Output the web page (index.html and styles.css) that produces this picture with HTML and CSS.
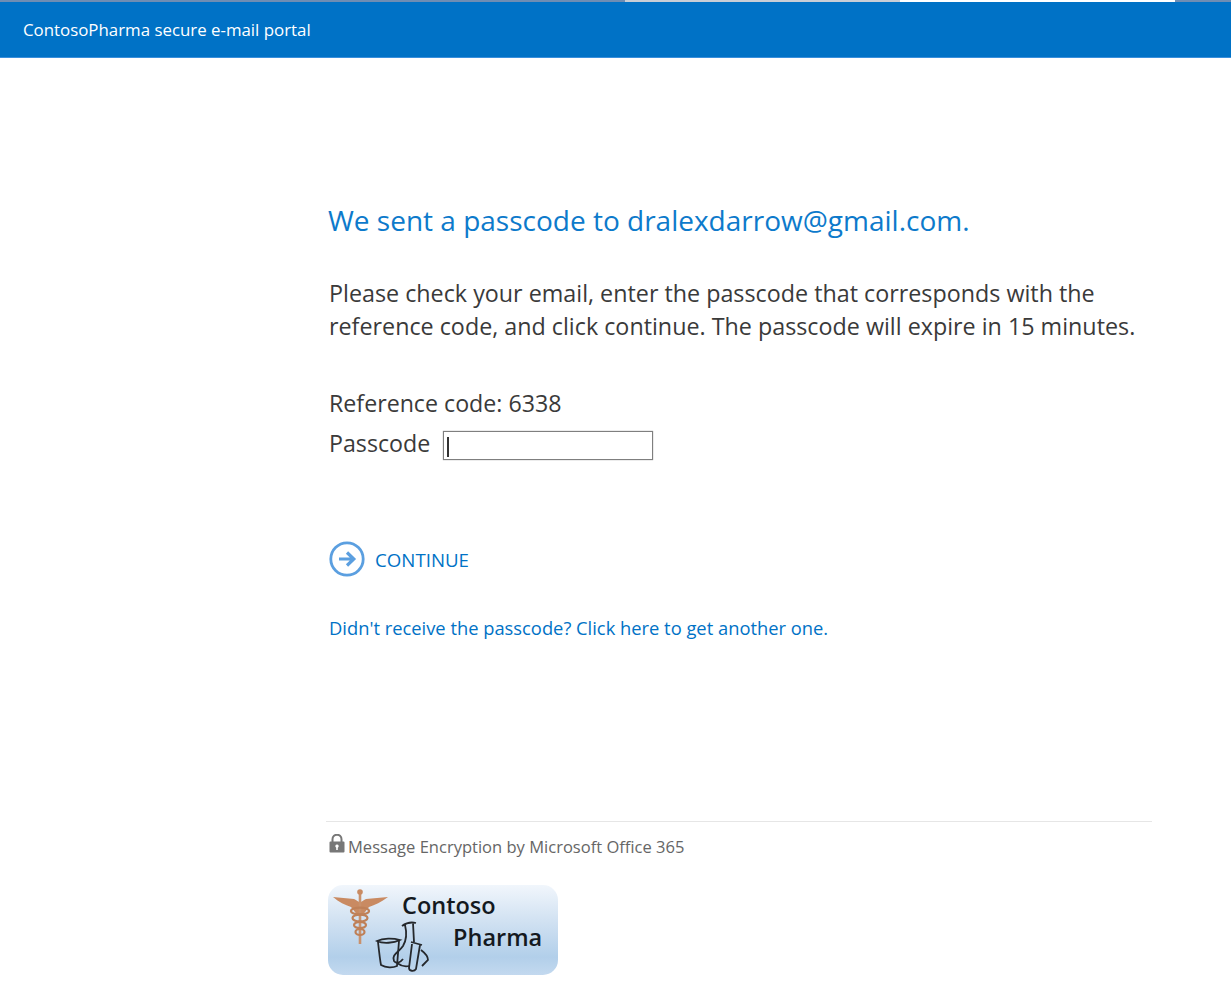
FILE: index.html
```html
<!DOCTYPE html>
<html lang="en">
<head>
<meta charset="UTF-8">
<meta name="viewport" content="width=device-width, initial-scale=1.0">
<link rel="stylesheet" href="styles.css">
<title>ContosoPharma secure e-mail portal</title>
</head>
<body>
  <!-- strip of the browser window left above the banner -->
  <div class="window-strip">
    <div class="strip-tab"></div>
    <div class="strip-tab strip-tab-active"></div>
    <div class="strip-end"></div>
  </div>
  <div class="banner">ContosoPharma secure e-mail portal</div>

  <div class="wrapper">
    <h1 class="title">We sent a passcode to dralexdarrow@gmail.com.</h1>
    <p class="intro">Please check your email, enter the passcode that corresponds with the reference code, and click continue. The passcode will expire in 15 minutes.</p>

    <div class="reference">Reference code: 6338</div>
    <div class="passcode-row">
      <label for="passcode">Passcode</label>
      <div class="passcode-box">
        <span class="caret"></span>
        <input type="text" id="passcode">
      </div>
    </div>

    <a class="continue" href="#">
      <svg class="continue-icon" width="36" height="36" viewBox="0 0 36 36">
        <circle cx="18" cy="18" r="16.2" fill="none" stroke="#5b9fe0" stroke-width="2.8"/>
        <path d="M10 18H24M18 11.5L24.8 18L18 24.5" fill="none" stroke="#5b9fe0" stroke-width="3.2"/>
      </svg>
      <span>CONTINUE</span>
    </a>

    <a class="resend" href="#">Didn't receive the passcode? Click here to get another one.</a>

    <div class="footer">
      <div class="encryption">
        <svg class="lock" width="16" height="19" viewBox="0 0 16 19">
          <path d="M3.5 8V5.2a4.5 4.5 0 0 1 9 0V8" fill="none" stroke="#777" stroke-width="2"/>
          <path fill-rule="evenodd" d="M1.5 7.5h13a1 1 0 0 1 1 1v9a1 1 0 0 1-1 1h-13a1 1 0 0 1-1-1v-9a1 1 0 0 1 1-1zM8 10.5a1.7 1.7 0 0 0-.8 3.2V16h1.6v-2.3A1.7 1.7 0 0 0 8 10.5z" fill="#777"/>
        </svg>
        <span>Message Encryption by Microsoft Office 365</span>
      </div>

      <div class="logo">
        <svg class="logo-art" width="230" height="90" viewBox="0 0 230 90">
          <!-- caduceus: wings, staff, snake loops -->
          <path d="M5 12L26 14C29 15 30 17 32 17C34 17 35 15 38 14L60 12C53 17 47 20 41 22C39 24 37 27 35 30H29C27 27 25 24 23 22C17 20 11 17 5 12Z" fill="#c98a62"/>
          <path d="M32 5V59" fill="none" stroke="#c9916c" stroke-width="2.6"/>
          <circle cx="32" cy="7" r="2.8" fill="#c98a62"/>
          <g fill="none" stroke="#bf8058" stroke-width="2.2">
            <ellipse cx="32" cy="26" rx="9" ry="3.4"/>
            <ellipse cx="32" cy="33" rx="7.5" ry="3.4"/>
            <ellipse cx="32" cy="40" rx="6" ry="3.2"/>
            <ellipse cx="32" cy="47" rx="4.5" ry="3"/>
          </g>
          <!-- beakers -->
          <g fill="none" stroke="#25282c" stroke-width="1.8">
            <path d="M49 56C55 53 65 53 72 55C66 58 55 59 49 56ZM50 57C51 66 52 75 53 80C58 83 65 83 69 81L71 56"/>
            <path d="M74 41C78 38 84 37 88 38M77 40C79 48 78 56 75 61C71 67 63 70 66 76C68 79 72 78 75 74M85 38L86 57"/>
            <path d="M83 57L94 60M92 60L88 84C86 87 81 86 81 83L84 59M93 65C97 68 100 72 100 75L94 81"/>
            <path d="M69 78C73 81 77 82 81 81"/>
          </g>
        </svg>
        <span class="logo-contoso">Contoso</span>
        <span class="logo-pharma">Pharma</span>
      </div>
    </div>
  </div>
</body>
</html>
```

FILE: styles.css
```css
* {
  box-sizing: border-box;
  margin: 0;
  padding: 0;
}
body {
  background-color: #ffffff;
  font-family: "Open Sans", "Noto Sans", sans-serif;
  overflow: hidden;
}
a {
  text-decoration: none;
  color: #0072c6;
}

/* top strip + banner */
.window-strip {
  display: flex;
  justify-content: flex-end;
  height: 2px;
  background-color: #6f8db3;
}
.strip-tab {
  width: 275px;
  background-color: #c9ced6;
}
.strip-tab-active {
  background-color: #ffffff;
}
.strip-end {
  width: 56px;
}
.banner {
  height: 56px;
  padding-left: 23px;
  line-height: 56px;
  background-color: #0072c6;
  border-bottom: 1px solid #3a8fdc;
  color: #ffffff;
  font-size: 16.85px;
}

/* main column */
.wrapper {
  width: 826px;
  margin-left: 326px;
}
.title {
  margin: 142px 0 0 2px;
  font-size: 28px;
  line-height: 40px;
  font-weight: 400;
  color: #0d7acb;
  white-space: nowrap;
}
.intro {
  width: 822px;
  margin: 37px 0 0 3px;
  font-size: 23.3px;
  line-height: 33px;
  color: #3a3a3a;
}
.reference {
  margin: 44px 0 0 3px;
  font-size: 23.2px;
  line-height: 33px;
  color: #3a3a3a;
}
.passcode-row {
  display: flex;
  align-items: flex-start;
  margin: 7px 0 0 3px;
  font-size: 23.2px;
  line-height: 33px;
  color: #3a3a3a;
}
.passcode-box {
  position: relative;
  margin: 4px 0 0 13px;
}
.passcode-box input {
  display: block;
  width: 210px;
  height: 29px;
  border: 1px solid #7f7f7f;
  box-shadow: 0 0 1px #8c8c8c;
  background-color: #ffffff;
  outline: none;
}
.caret {
  position: absolute;
  top: 6px;
  left: 4px;
  width: 2px;
  height: 20px;
  background-color: #333333;
}
.continue {
  display: flex;
  align-items: center;
  gap: 10px;
  margin: 81px 0 0 3px;
  font-size: 18.7px;
}
.resend {
  display: block;
  margin: 38px 0 0 3px;
  font-size: 18.33px;
  line-height: 26px;
  white-space: nowrap;
}

/* footer */
.footer {
  margin-top: 180px;
  border-top: 1px solid #e6e6e6;
}
.encryption {
  display: flex;
  align-items: flex-start;
  gap: 3px;
  margin: 12px 0 0 3px;
  font-size: 16.55px;
  line-height: 26px;
  color: #666666;
}
.lock {
  flex: none;
}
.logo {
  position: relative;
  width: 230px;
  height: 90px;
  margin: 25px 0 0 2px;
  border-radius: 15px;
  background: linear-gradient(#f1f6fc, #d5e4f3 35%, #b2cfea 80%, #c3d9ef);
  font-size: 23.5px;
  font-weight: 600;
  color: #14191f;
}
.logo-art {
  position: absolute;
  top: 0;
  left: 0;
}
.logo-contoso {
  position: absolute;
  top: 4px;
  left: 74px;
}
.logo-pharma {
  position: absolute;
  top: 36px;
  left: 125px;
}
```
